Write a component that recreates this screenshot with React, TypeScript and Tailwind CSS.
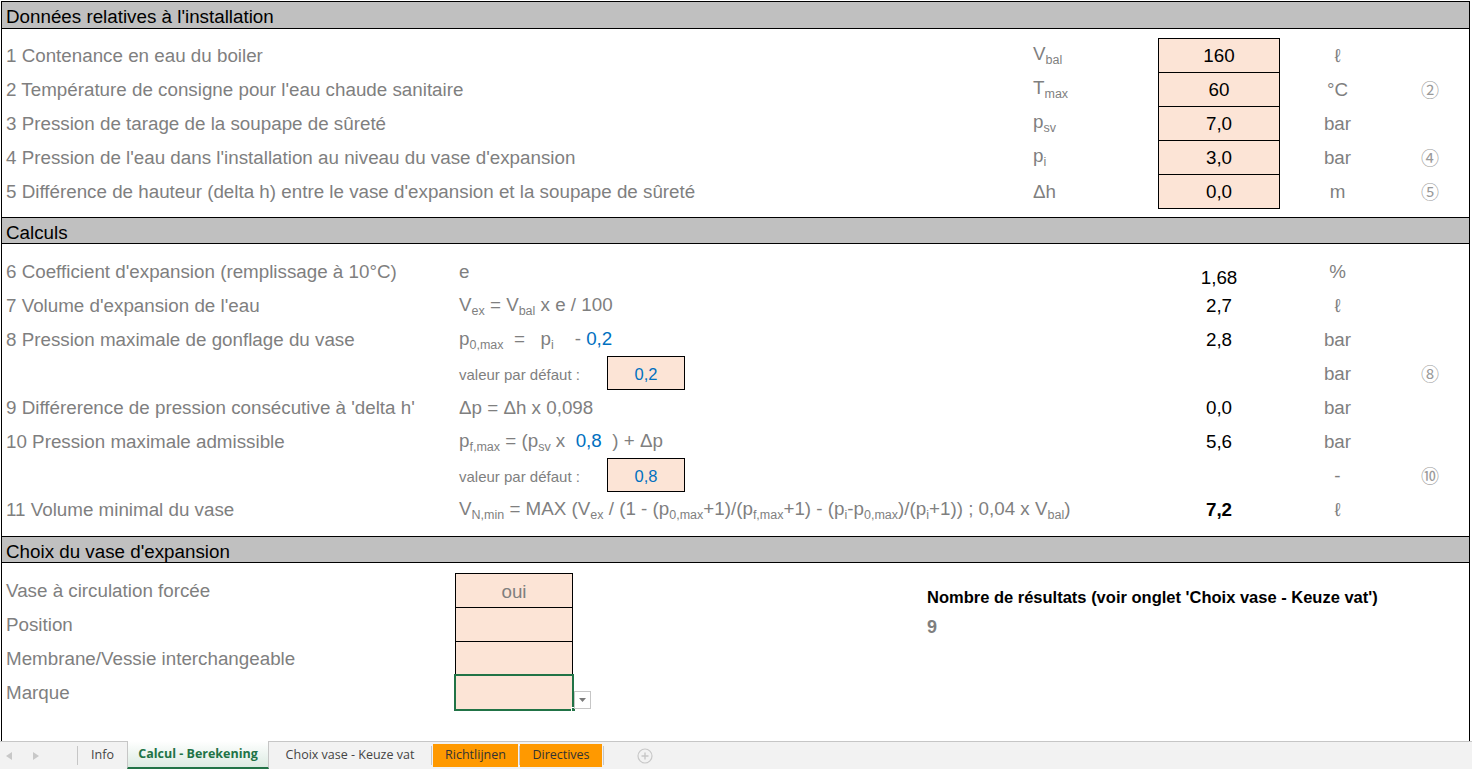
import React from 'react';

function Sub({ children }: { children: React.ReactNode }) {
  return <span className="text-[12.5px] align-[-4px]">{children}</span>;
}

function Blue({ children }: { children: React.ReactNode }) {
  return <span className="text-[#0070c0]">{children}</span>;
}

function SectionHeader({ title, first = false }: { title: string; first?: boolean }) {
  return (
    <div
      className={`flex h-[27px] items-center border-b border-black bg-[#c0c0c0] pl-[4px] pt-[5px] text-black ${
        first ? '' : 'border-t'
      }`}
    >
      {title}
    </div>
  );
}

function Note({ children }: { children?: React.ReactNode }) {
  return (
    <div className="w-[70px] text-center font-['Noto_Sans_CJK_JP',sans-serif] text-[18px] text-[#9a9a9a]">
      {children}
    </div>
  );
}

type InputRow = {
  label: string;
  symbol: React.ReactNode;
  value: string;
  unit: string;
  note?: string;
};

const installation: InputRow[] = [
  { label: '1 Contenance en eau du boiler', symbol: <>V<Sub>bal</Sub></>, value: '160', unit: 'ℓ' },
  {
    label: "2 Température de consigne pour l'eau chaude sanitaire",
    symbol: <>T<Sub>max</Sub></>,
    value: '60',
    unit: '°C',
    note: '②',
  },
  { label: '3 Pression de tarage de la soupape de sûreté', symbol: <>p<Sub>sv</Sub></>, value: '7,0', unit: 'bar' },
  {
    label: "4 Pression de l'eau dans l'installation au niveau du vase d'expansion",
    symbol: <>p<Sub>i</Sub></>,
    value: '3,0',
    unit: 'bar',
    note: '④',
  },
  {
    label: "5 Différence de hauteur (delta h) entre le vase d'expansion et la soupape de sûreté",
    symbol: 'Δh',
    value: '0,0',
    unit: 'm',
    note: '⑤',
  },
];

type CalcRow = {
  label?: string;
  formula?: React.ReactNode;
  defaultValue?: string;
  value?: string;
  bold?: boolean;
  low?: boolean;
  unit: string;
  note?: string;
};

const calculs: CalcRow[] = [
  { label: "6 Coefficient d'expansion (remplissage à 10°C)", formula: 'e', value: '1,68', low: true, unit: '%' },
  {
    label: "7 Volume d'expansion de l'eau",
    formula: (
      <>
        V<Sub>ex</Sub> = V<Sub>bal</Sub> x e / 100
      </>
    ),
    value: '2,7',
    unit: 'ℓ',
  },
  {
    label: '8 Pression maximale de gonflage du vase',
    formula: (
      <>
        p<Sub>0,max</Sub>
        {'  =   '}p<Sub>i</Sub>
        {'    - '}
        <Blue>0,2</Blue>
      </>
    ),
    value: '2,8',
    unit: 'bar',
  },
  { defaultValue: '0,2', unit: 'bar', note: '⑧' },
  {
    label: "9 Différerence de pression consécutive à 'delta h'",
    formula: 'Δp = Δh x 0,098',
    value: '0,0',
    unit: 'bar',
  },
  {
    label: '10 Pression maximale admissible',
    formula: (
      <>
        p<Sub>f,max</Sub> = (p<Sub>sv</Sub>
        {' x  '}
        <Blue>0,8</Blue>
        {'  ) + Δp'}
      </>
    ),
    value: '5,6',
    unit: 'bar',
  },
  { defaultValue: '0,8', unit: '-', note: '⑩' },
  {
    label: '11 Volume minimal du vase',
    formula: (
      <>
        V<Sub>N,min</Sub> = MAX (V<Sub>ex</Sub> / (1 - (p<Sub>0,max</Sub>+1)/(p<Sub>f,max</Sub>+1) - (p<Sub>i</Sub>-p
        <Sub>0,max</Sub>)/(p<Sub>i</Sub>+1)) ; 0,04 x V<Sub>bal</Sub>)
      </>
    ),
    value: '7,2',
    bold: true,
    unit: 'ℓ',
  },
];

const choix = ['Vase à circulation forcée', 'Position', 'Membrane/Vessie interchangeable', 'Marque'];

function Triangle({ dir }: { dir: 'left' | 'right' }) {
  return (
    <svg width="6" height="8" viewBox="0 0 6 8">
      <path d={dir === 'left' ? 'M6 0 L0 4 L6 8 Z' : 'M0 0 L6 4 L0 8 Z'} fill="#c8c8c8" />
    </svg>
  );
}

export default function App() {
  return (
    <div className="flex h-[769px] w-[1472px] flex-col overflow-hidden bg-white font-['Liberation_Sans',Arial,sans-serif] text-[18.8px] leading-none">
      <div className="ml-[1px] mt-[1px] flex w-[1469px] flex-1 flex-col border-x border-t border-black">
        <SectionHeader title="Données relatives à l'installation" first />
        <div className="pb-[9px] pt-[9px]">
          {installation.map((row, i) => {
            const last = i === installation.length - 1;
            return (
              <div key={row.label} className="flex h-[34px] items-center">
                <div className="w-[1031px] pl-[4px] pt-[2px] text-[#7f7f7f]">{row.label}</div>
                <div className="w-[125px] pt-[2px] text-[#7f7f7f]">{row.symbol}</div>
                <div
                  className={`flex w-[122px] items-center justify-center self-start border-x border-t border-black bg-[#fce4d6] pt-[2px] text-black ${
                    last ? 'h-[35px] border-b' : 'h-[34px]'
                  }`}
                >
                  {row.value}
                </div>
                <div className="w-[115px] pt-[2px] text-center text-[#7f7f7f]">{row.unit}</div>
                <Note>{row.note}</Note>
              </div>
            );
          })}
        </div>

        <SectionHeader title="Calculs" />
        <div className="pb-[10px] pt-[10px]">
          {calculs.map((row, i) => (
            <div key={i} className="flex h-[34px] items-center">
              <div className="w-[457px] pl-[4px] pt-[3px] text-[#7f7f7f]">{row.label}</div>
              <div className="flex w-[699px] items-center whitespace-pre pt-[3px] text-[#7f7f7f]">
                {row.defaultValue ? (
                  <>
                    <span className="w-[148px] text-[15px]">valeur par défaut :</span>
                    <span className="-mt-[3px] flex h-[34px] w-[78px] items-center justify-center border border-black bg-[#fce4d6] pt-[2px] text-[16.5px] text-[#0070c0]">
                      {row.defaultValue}
                    </span>
                  </>
                ) : (
                  <span>{row.formula}</span>
                )}
              </div>
              <div
                className={`w-[122px] text-center text-black ${row.bold ? 'font-bold' : ''} ${
                  row.low ? 'pt-[14px]' : 'pt-[3px]'
                }`}
              >
                {row.value}
              </div>
              <div className="w-[115px] pt-[3px] text-center text-[#7f7f7f]">{row.unit}</div>
              <Note>{row.note}</Note>
            </div>
          ))}
        </div>

        <SectionHeader title="Choix du vase d'expansion" />
        <div className="flex-1 pt-[10px]">
          {choix.map((label, i) => {
            const selected = i === choix.length - 1;
            return (
              <div key={label} className="flex h-[34px] items-center">
                <div className="w-[453px] pl-[4px] pt-[3px] text-[#7f7f7f]">{label}</div>
                {selected ? (
                  <div className="relative h-[34px] w-[118px] self-start bg-[#fce4d6]">
                    <div className="absolute -bottom-[2px] -left-[1px] -right-[1px] -top-[1px] border-2 border-[#217346]" />
                    <div className="absolute -bottom-[3px] -right-[3px] h-[5px] w-[5px] border border-white bg-[#217346]" />
                    <div className="absolute -right-[18px] top-[16px] flex h-[18px] w-[17px] items-center justify-center border border-[#c6c6c6] bg-white">
                      <svg width="7" height="4" viewBox="0 0 7 4">
                        <path d="M0 0 L7 0 L3.5 4 Z" fill="#7a7a7a" />
                      </svg>
                    </div>
                  </div>
                ) : (
                  <div className="flex h-[34px] w-[118px] items-center justify-center self-start border-x border-t border-black bg-[#fce4d6] pt-[3px] text-[#7f7f7f]">
                    {i === 0 ? 'oui' : ''}
                  </div>
                )}
                {i === 0 && (
                  <div className="ml-[354px] self-end pb-[2px] text-[16.5px] font-bold text-black">
                    Nombre de résultats (voir onglet 'Choix vase - Keuze vat')
                  </div>
                )}
                {i === 1 && <div className="ml-[354px] pt-[5px] text-[18px] font-bold text-[#7f7f7f]">9</div>}
              </div>
            );
          })}
        </div>
      </div>

      <div className="flex h-[28px] items-stretch border-t border-[#c6c6c6] bg-[#f2f2f2] font-['Open_Sans',sans-serif] text-[12.5px] text-[#444444]">
        <div className="flex w-[77px] items-center gap-[21px] pl-[6px]">
          <Triangle dir="left" />
          <Triangle dir="right" />
        </div>
        <div className="my-[4px] w-px bg-[#c6c6c6]" />
        <div className="flex w-[49px] items-center justify-center">Info</div>
        <div className="-mt-px flex w-[142px] items-center justify-center border-x border-b-2 border-x-[#c6c6c6] border-b-[#217346] bg-gradient-to-b from-white to-[#dcebe2] font-bold text-[#217346]">
          Calcul - Berekening
        </div>
        <div className="flex w-[162px] items-center justify-center">Choix vase - Keuze vat</div>
        <div className="my-[4px] w-px bg-[#c6c6c6]" />
        <div className="my-[2px] ml-px flex w-[85px] items-center justify-center bg-[#ff9900] text-[#333333]">
          Richtlijnen
        </div>
        <div className="my-[4px] ml-px w-px bg-[#c6c6c6]" />
        <div className="my-[2px] flex w-[82px] items-center justify-center bg-[#ff9900] text-[#333333]">
          Directives
        </div>
        <div className="my-[4px] ml-px w-px bg-[#c6c6c6]" />
        <div className="flex w-[82px] items-center justify-center">
          <svg width="16" height="16" viewBox="0 0 16 16">
            <circle cx="8" cy="8" r="7" fill="none" stroke="#c8c8c8" strokeWidth="1.2" />
            <path d="M8 4.5 V11.5 M4.5 8 H11.5" stroke="#c8c8c8" strokeWidth="1.4" />
          </svg>
        </div>
      </div>
    </div>
  );
}
